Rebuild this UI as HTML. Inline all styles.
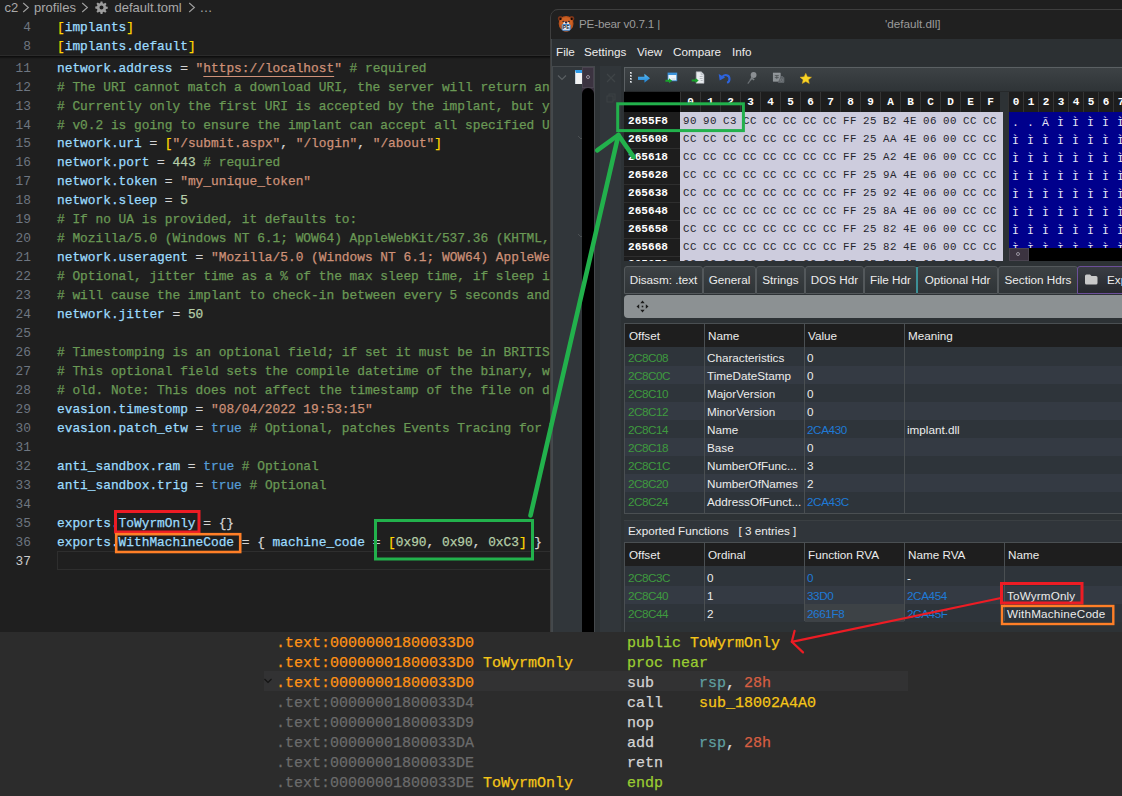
<!DOCTYPE html>
<html><head><meta charset="utf-8"><title>default.toml</title>
<style>
*{box-sizing:border-box;margin:0;padding:0}
html,body{width:1122px;height:796px;overflow:hidden;background:#1f1f1f}
body{position:relative;font-family:"Liberation Sans",sans-serif}
.abs{position:absolute}
#vs{position:absolute;left:0;top:0;width:560px;height:632px;background:#1f1f1f;overflow:hidden}
#bc{position:absolute;left:4px;top:0;height:16px;line-height:15px;font-size:13px;color:#a9a9a9;white-space:pre}
.ln{position:absolute;left:0;width:560px;height:19px;line-height:19px;font-family:"Liberation Mono",monospace;font-size:12.83px;white-space:pre;color:#d4d4d4}
.ln i{position:absolute;left:0;width:31px;text-align:right;font-style:normal;color:#6e7681}
.ln.cur i{color:#cccccc}
.ln b{position:absolute;left:57px;font-weight:normal}
.k{color:#9cdcfe}.s{color:#ce9178}.c{color:#6a9955}.n{color:#b5cea8}.t{color:#569cd6}.y{color:#ffd700}.u{text-decoration:underline;text-underline-offset:4px;text-decoration-thickness:1px}
#ida{position:absolute;left:0;top:632px;width:1122px;height:164px;background:#2c2c2c;overflow:hidden}
.il{position:absolute;left:0;width:1122px;height:20px;line-height:20px;font-family:"Liberation Mono",monospace;font-size:15px;white-space:pre;color:#d4d4d4}
.il span{position:absolute;top:0}
.il span span{position:static}
.a1{left:276px;color:#ff9214}.a2{left:276px;color:#6b6b6b}.lb{left:483px;color:#f5c518}.m{left:627px}.o{left:699px}
.lbc{color:#f5c518}
.g{color:#9acd32}.r{color:#5f9ea0}.h{color:#d75f42}
#pe{position:absolute;left:551px;top:9px;width:580px;height:623px;background:#2d3235;border-top-left-radius:8px;overflow:hidden;font-size:12px;color:#e8e8e8}
#pe{position:absolute;left:0;top:0;width:1122px;height:632px;background:none;border-radius:0;clip-path:inset(9px 0 0 550px round 8px 0 0 0);font-size:11.7px;color:#ececec;overflow:hidden}
.t12{position:absolute;height:18px;line-height:18px;font-size:11.7px;white-space:pre}
.hh{position:absolute;height:20px;line-height:20px;text-align:center;font-family:"Liberation Mono",monospace;font-weight:bold;font-size:11px;color:#fff;border-left:1px solid #343434}
.ha{position:absolute;left:624px;width:56px;line-height:18px;padding-left:4px;font-family:"Liberation Mono",monospace;font-weight:bold;font-size:11.1px;color:#fff;overflow:hidden}
.hv{position:absolute;width:20px;line-height:18px;text-align:center;font-family:"Liberation Mono",monospace;font-size:10.8px;color:#26262e;overflow:hidden;letter-spacing:0.5px}
.ar{position:absolute;left:-1px;height:18px;line-height:20px;font-family:"Liberation Mono",monospace;font-size:11.6px;color:#e4e4f4;white-space:pre}
.ar span{display:inline-block;width:15px;text-align:center}
.bc{position:absolute;top:0;height:16px;line-height:15px;font-size:13px;color:#a9a9a9;white-space:pre}
.ln b,.il{-webkit-text-stroke:0.25px}

</style></head><body>
<div id="vs">
<div class="bc" style="left:4.5px">c2</div><svg class="abs" style="left:22px;top:2px" width="8" height="11" viewBox="0 0 8 11"><path d="M1.2 1 L6.4 5.5 L1.2 10" fill="none" stroke="#a0a0a0" stroke-width="1.1"/></svg><div class="bc" style="left:34px">profiles</div><svg class="abs" style="left:81px;top:2px" width="8" height="11" viewBox="0 0 8 11"><path d="M1.2 1 L6.4 5.5 L1.2 10" fill="none" stroke="#a0a0a0" stroke-width="1.1"/></svg><svg class="abs" style="left:95px;top:1px" width="13" height="13" viewBox="0 0 24 24"><path fill="#9d9d9d" fill-rule="evenodd" d="M10.3 1h3.4l.6 3.2 1.9.8 2.7-1.8 2.4 2.4-1.8 2.7.8 1.9 3.2.6v3.4l-3.2.6-.8 1.9 1.8 2.7-2.4 2.4-2.7-1.8-1.9.8-.6 3.2h-3.4l-.6-3.2-1.9-.8-2.7 1.8-2.4-2.4 1.8-2.7-.8-1.9L.5 13.7v-3.4l3.2-.6.8-1.9-1.8-2.7 2.400-2.4 2.700 1.800 1.900-.8zM12 8.300a3.700 3.700 0 1 0 0 7.400 3.700 3.700 0 0 0 0-7.400z"/></svg><div class="bc" style="left:114.5px">default.toml</div><svg class="abs" style="left:188px;top:2px" width="8" height="11" viewBox="0 0 8 11"><path d="M1.2 1 L6.4 5.5 L1.2 10" fill="none" stroke="#a0a0a0" stroke-width="1.1"/></svg><div class="bc" style="left:199.5px">…</div>
<div class="ln" style="top:18px"><i>4</i><b><span class="y">[</span><span class="k">implants</span><span class="y">]</span></b></div>
<div class="ln" style="top:37px"><i>8</i><b><span class="y">[</span><span class="k">implants.default</span><span class="y">]</span></b></div>
<div class="abs" style="left:0;top:55px;width:560px;height:1px;background:#2b2b2b"></div>
<div class="abs" style="left:0;top:56px;width:560px;height:3px;background:linear-gradient(#000a,#0000)"></div>
<div class="ln" style="top:59px"><i>11</i><b><span class="k">network.address</span> = <span class="s">"</span><span class="s u">https://localhost</span><span class="s">"</span> <span class="c"># required</span></b></div>
<div class="ln" style="top:78px"><i>12</i><b><span class="c"># The URI cannot match a download URI, the server will return an</span></b></div>
<div class="ln" style="top:97px"><i>13</i><b><span class="c"># Currently only the first URI is accepted by the implant, but yo</span></b></div>
<div class="ln" style="top:116px"><i>14</i><b><span class="c"># v0.2 is going to ensure the implant can accept all specified UR</span></b></div>
<div class="ln" style="top:134px"><i>15</i><b><span class="k">network.uri</span> = <span class="y">[</span><span class="s">"/submit.aspx"</span>, <span class="s">"/login"</span>, <span class="s">"/about"</span><span class="y">]</span></b></div>
<div class="ln" style="top:153px"><i>16</i><b><span class="k">network.port</span> = <span class="n">443</span> <span class="c"># required</span></b></div>
<div class="ln" style="top:172px"><i>17</i><b><span class="k">network.token</span> = <span class="s">"my_unique_token"</span></b></div>
<div class="ln" style="top:191px"><i>18</i><b><span class="k">network.sleep</span> = <span class="n">5</span></b></div>
<div class="ln" style="top:210px"><i>19</i><b><span class="c"># If no UA is provided, it defaults to:</span></b></div>
<div class="ln" style="top:229px"><i>20</i><b><span class="c"># Mozilla/5.0 (Windows NT 6.1; WOW64) AppleWebKit/537.36 (KHTML, l</span></b></div>
<div class="ln" style="top:248px"><i>21</i><b><span class="k">network.useragent</span> = <span class="s">"Mozilla/5.0 (Windows NT 6.1; WOW64) AppleWeb</span></b></div>
<div class="ln" style="top:267px"><i>22</i><b><span class="c"># Optional, jitter time as a % of the max sleep time, if sleep is</span></b></div>
<div class="ln" style="top:286px"><i>23</i><b><span class="c"># will cause the implant to check-in between every 5 seconds and </span></b></div>
<div class="ln" style="top:305px"><i>24</i><b><span class="k">network.jitter</span> = <span class="n">50</span></b></div>
<div class="ln" style="top:324px"><i>25</i><b></b></div>
<div class="ln" style="top:343px"><i>26</i><b><span class="c"># Timestomping is an optional field; if set it must be in BRITISH</span></b></div>
<div class="ln" style="top:362px"><i>27</i><b><span class="c"># This optional field sets the compile datetime of the binary, wh</span></b></div>
<div class="ln" style="top:381px"><i>28</i><b><span class="c"># old. Note: This does not affect the timestamp of the file on di</span></b></div>
<div class="ln" style="top:400px"><i>29</i><b><span class="k">evasion.timestomp</span> = <span class="s">"08/04/2022 19:53:15"</span></b></div>
<div class="ln" style="top:419px"><i>30</i><b><span class="k">evasion.patch_etw</span> = <span class="t">true</span> <span class="c"># Optional, patches Events Tracing for W</span></b></div>
<div class="ln" style="top:438px"><i>31</i><b></b></div>
<div class="ln" style="top:457px"><i>32</i><b><span class="k">anti_sandbox.ram</span> = <span class="t">true</span> <span class="c"># Optional</span></b></div>
<div class="ln" style="top:476px"><i>33</i><b><span class="k">anti_sandbox.trig</span> = <span class="t">true</span> <span class="c"># Optional</span></b></div>
<div class="ln" style="top:495px"><i>34</i><b></b></div>
<div class="ln" style="top:514px"><i>35</i><b><span class="k">exports.ToWyrmOnly</span> = {}</b></div>
<div class="ln" style="top:533px"><i>36</i><b><span class="k">exports.WithMachineCode</span> = { <span class="k">machine_code</span> = <span class="y">[</span><span class="n">0x90</span>, <span class="n">0x90</span>, <span class="n">0xC3</span><span class="y">]</span> }</b></div>
<div class="ln cur" style="top:552px"><i>37</i><b></b></div>
<div class="abs" style="left:57px;top:551px;width:503px;height:19px;border:1px solid #2e2e2e"></div>
</div>
<div id="pe">
<div style="position:absolute;left:551px;top:9px;width:580px;height:30px;background:#202020;border-top:1px solid #3c3c3c"></div>
<svg class="abs" style="left:557px;top:15px" width="18" height="18" viewBox="0 0 18 18">
<circle cx="3.500" cy="3.500" r="2.600" fill="#7a3418"/><circle cx="14.700" cy="3.500" r="2.600" fill="#7a3418"/>
<ellipse cx="9.100" cy="8.700" rx="7.400" ry="7.600" fill="#b9521d"/>
<ellipse cx="9.100" cy="7.800" rx="6.200" ry="5.600" fill="#cd6123"/>
<ellipse cx="9.100" cy="15" rx="3.200" ry="1.600" fill="#c8683a"/>
<ellipse cx="3.600" cy="3.900" rx="1.200" ry="1.100" fill="#1a0905" transform="rotate(-40 3.600 3.900)"/><ellipse cx="14.600" cy="3.900" rx="1.200" ry="1.100" fill="#1a0905" transform="rotate(40 14.600 3.900)"/>
<ellipse cx="6.400" cy="6.600" rx="1.100" ry="0.800" fill="#3a2a2a"/><ellipse cx="11.900" cy="6.600" rx="1.100" ry="0.800" fill="#3a2a2a"/>
<ellipse cx="7.600" cy="8.300" rx="1.300" ry="1.500" fill="#efe6dc"/><ellipse cx="10.700" cy="8.300" rx="1.300" ry="1.500" fill="#efe6dc"/>
<ellipse cx="9.100" cy="7.500" rx="1.300" ry="0.900" fill="#1c2350"/>
<rect x="5.200" y="9.500" width="8" height="5.800" rx="0.800" fill="#eef2f7" stroke="#2f86d8" stroke-width="0.900"/>
<text x="9.200" y="14.300" text-anchor="middle" font-family="Liberation Sans, sans-serif" font-weight="bold" font-size="5" fill="#20242c">PE</text>
</svg>
<div class="t12" style="left:579px;top:15px;color:#9b9b9b;letter-spacing:-0.2px">PE-bear v0.7.1 |</div>
<div class="t12" style="left:885px;top:15px;color:#9b9b9b">'default.dll]</div>
<div class="abs" style="left:550px;top:9px;width:600px;height:700px;border:1px solid #3e3e3e;border-radius:8px 0 0 0;pointer-events:none"></div>
<div style="position:absolute;left:551px;top:39px;width:580px;height:27px;background:#2c3033"></div>
<div class="t12" style="left:556px;top:43px;color:#ececec">File</div>
<div class="t12" style="left:584px;top:43px;color:#ececec">Settings</div>
<div class="t12" style="left:637px;top:43px;color:#ececec">View</div>
<div class="t12" style="left:673px;top:43px;color:#ececec">Compare</div>
<div class="t12" style="left:732px;top:43px;color:#ececec">Info</div>
<div style="position:absolute;left:551px;top:66px;width:580px;height:566px;background:#2d3235"></div>
<div style="position:absolute;left:551px;top:39px;width:1px;height:593px;background:#43484b"></div>
<div style="position:absolute;left:552px;top:66px;width:43px;height:566px;background:#31363a;border:1px solid #45494c;border-bottom:none"></div>
<svg class="abs" style="left:556px;top:72px" width="12" height="12" viewBox="0 0 12 12"><path d="M2 3.5 L6 7.5 L10 3.5" fill="none" stroke="#5a5f62" stroke-width="1.2"/></svg>
<svg class="abs" style="left:576px;top:133px" width="10" height="10" viewBox="0 0 10 10"><path d="M2 3 L5 6 L8 3" fill="none" stroke="#4a4f52" stroke-width="1"/></svg>
<svg class="abs" style="left:576px;top:231px" width="10" height="10" viewBox="0 0 10 10"><path d="M2 3 L5 6 L8 3" fill="none" stroke="#4a4f52" stroke-width="1"/></svg>
<div style="position:absolute;left:575px;top:70px;width:7px;height:14px;background:#f2f2f2;border-top:3px solid #2d9be8;border-left:1px solid #c9d3dc"></div>
<div style="position:absolute;left:582px;top:67px;width:12px;height:565px;background:#000"></div>
<div style="position:absolute;left:582px;top:67px;width:12px;height:21px;background:#3b3340;border:1px solid #4a4450"></div>
<div style="position:absolute;left:586px;top:75px;width:4px;height:4px;border:1px solid #9a94a0;border-radius:2px"></div>
<div style="position:absolute;left:582px;top:88px;width:12px;height:8px;background:#3b3340"></div>
<div style="position:absolute;left:582px;top:88px;width:12px;height:16px;background:#000;border-radius:6px 6px 0 0"></div>
<div style="position:absolute;left:600px;top:66px;width:21px;height:566px;background:#31363a"></div>
<svg class="abs" style="left:605px;top:72px" width="12" height="12" viewBox="0 0 12 12"><path d="M2 2 L10 10 M10 2 L2 10" fill="none" stroke="#3f4447" stroke-width="1.3"/></svg>
<svg class="abs" style="left:605px;top:92px" width="12" height="12" viewBox="0 0 12 12"><rect x="2" y="4" width="6" height="6" fill="none" stroke="#3b4043" stroke-width="1.1"/><path d="M4 4 V2 H10 V8 H8" fill="none" stroke="#3b4043" stroke-width="1.1"/></svg>
<div style="position:absolute;left:624px;top:67px;width:510px;height:25px;background:linear-gradient(#3d4245,#2f3437);border-top:1px solid #5b6063;border-left:1px solid #5b6063;border-bottom:1px solid #26292b"></div>
<div style="position:absolute;left:630px;top:72px;width:2px;height:2px;background:#9aa0a4"></div>
<div style="position:absolute;left:630px;top:72px;width:1px;height:1px;background:#f0f0f0"></div>
<div style="position:absolute;left:630px;top:75px;width:2px;height:2px;background:#9aa0a4"></div>
<div style="position:absolute;left:630px;top:75px;width:1px;height:1px;background:#f0f0f0"></div>
<div style="position:absolute;left:630px;top:78px;width:2px;height:2px;background:#9aa0a4"></div>
<div style="position:absolute;left:630px;top:78px;width:1px;height:1px;background:#f0f0f0"></div>
<div style="position:absolute;left:630px;top:81px;width:2px;height:2px;background:#9aa0a4"></div>
<div style="position:absolute;left:630px;top:81px;width:1px;height:1px;background:#f0f0f0"></div>
<svg class="abs" style="left:624px;top:64px" width="200" height="30" viewBox="0 0 200 30">
<defs><linearGradient id="gb" x1="0" y1="0" x2="0" y2="1"><stop offset="0" stop-color="#5bbcf5"/><stop offset="1" stop-color="#1c7fd0"/></linearGradient></defs>
<g transform="translate(14,9.8)"><path d="M0 2.9 H6.4 V0 L12 4.5 L6.4 9 V6.1 H0 Z" fill="url(#gb)"/></g>
<g transform="translate(41.4,8.6)"><rect x="2.6" y="0.4" width="8.8" height="7.8" fill="#eef4fa" stroke="#3b93dc" stroke-width="0.8"/><rect x="2.6" y="0.4" width="8.800" height="2" fill="#3b93dc"/><path d="M0 7.200 H3.600 V5.600 L6.800 8.200 L3.600 10.600 V9.200 H0 Z" fill="#18a32b"/><path d="M6 6 h4 v1 h-4z" fill="#c8d4e0"/></g>
<g transform="translate(67.7,7.500)"><path d="M4.500 0.300 H9.500 L12.300 3 V11.800 H4.500 Z" fill="#e9ecef" stroke="#a7adb3" stroke-width="0.600"/><path d="M9.300 0.300 V3.200 H12.300" fill="#cfd4d9" stroke="#a7adb3" stroke-width="0.500"/><path d="M8 5 H11 M8 7 H11 M9 9 H11" stroke="#a0a6ac" stroke-width="0.700"/><path d="M0 8 H3.800 V6.400 L7 9 L3.800 11.600 V10 H0 Z" fill="#18a32b"/></g>
<g transform="translate(94.500,8.900)"><path d="M3.500 4.200 C6 0.800 11 1.800 11 6 C11 8 10 9.300 8.600 10" fill="none" stroke="#2d63dc" stroke-width="2.100"/><path d="M0.200 1.200 L1.200 7.600 L6.600 4.600 Z" fill="#2d63dc"/></g>
<g transform="translate(123.400,8)"><circle cx="6.200" cy="3" r="2.900" fill="#8b8f93"/><path d="M4.800 5.500 L2.800 8.200 M3.600 5.600 L6.800 7.800" stroke="#7b8084" stroke-width="1.600" fill="none"/><path d="M3.400 7.600 L0.400 11.600" stroke="#6b7074" stroke-width="1.200"/></g>
<g transform="translate(148.800,8.600)"><rect x="0.400" y="0.400" width="7" height="8.200" fill="#8d9296" stroke="#a4a9ad" stroke-width="0.500"/><path d="M2 3 H6 M2 5 H6 M4 3 V6.500" stroke="#4a4f52" stroke-width="0.800"/><path d="M7.800 4 H10 L11.200 5.200 V9.800 H5.500 V8.800" fill="#5d6266" stroke="#777c80" stroke-width="0.500"/><circle cx="8.700" cy="7.600" r="1.300" fill="none" stroke="#80858a" stroke-width="0.600"/></g>
<g transform="translate(176,9.300)"><path d="M5.750 0 L7.400 3.500 L11.500 3.900 L8.400 6.500 L9.300 10.200 L5.750 8.300 L2.200 10.200 L3.100 6.500 L0 3.900 L4.100 3.500 Z" fill="#f8d526" stroke="#dca818" stroke-width="0.500"/></g>
</svg>
<div class="hexwrap" style="position:absolute;left:624px;top:92px;width:380px;height:170px;background:#2d3235;overflow:hidden"></div>
<div style="position:absolute;left:624px;top:92px;width:56px;height:20px;background:#000"></div>
<div style="position:absolute;left:680px;top:92px;width:320px;height:20px;background:#1d1d1d"></div>
<div class="hh" style="left:680px;top:92px;width:20px">0</div>
<div class="hh" style="left:700px;top:92px;width:20px">1</div>
<div class="hh" style="left:720px;top:92px;width:20px">2</div>
<div class="hh" style="left:740px;top:92px;width:20px">3</div>
<div class="hh" style="left:760px;top:92px;width:20px">4</div>
<div class="hh" style="left:780px;top:92px;width:20px">5</div>
<div class="hh" style="left:800px;top:92px;width:20px">6</div>
<div class="hh" style="left:820px;top:92px;width:20px">7</div>
<div class="hh" style="left:840px;top:92px;width:20px">8</div>
<div class="hh" style="left:860px;top:92px;width:20px">9</div>
<div class="hh" style="left:880px;top:92px;width:20px">A</div>
<div class="hh" style="left:900px;top:92px;width:20px">B</div>
<div class="hh" style="left:920px;top:92px;width:20px">C</div>
<div class="hh" style="left:940px;top:92px;width:20px">D</div>
<div class="hh" style="left:960px;top:92px;width:20px">E</div>
<div class="hh" style="left:980px;top:92px;width:20px">F</div>
<div style="position:absolute;left:680px;top:112px;width:323px;height:149px;background:#cdccdd"></div>
<div style="position:absolute;left:624px;top:112px;width:56px;height:149px;background:#1d1d1d"></div>
<div class="ha" style="top:112px;height:18px">2655F8</div>
<div class="hv" style="left:680px;top:112px;height:18px">90</div>
<div class="hv" style="left:700px;top:112px;height:18px">90</div>
<div class="hv" style="left:720px;top:112px;height:18px">C3</div>
<div class="hv" style="left:740px;top:112px;height:18px">CC</div>
<div class="hv" style="left:760px;top:112px;height:18px">CC</div>
<div class="hv" style="left:780px;top:112px;height:18px">CC</div>
<div class="hv" style="left:800px;top:112px;height:18px">CC</div>
<div class="hv" style="left:820px;top:112px;height:18px">CC</div>
<div class="hv" style="left:840px;top:112px;height:18px">FF</div>
<div class="hv" style="left:860px;top:112px;height:18px">25</div>
<div class="hv" style="left:880px;top:112px;height:18px">B2</div>
<div class="hv" style="left:900px;top:112px;height:18px">4E</div>
<div class="hv" style="left:920px;top:112px;height:18px">06</div>
<div class="hv" style="left:940px;top:112px;height:18px">00</div>
<div class="hv" style="left:960px;top:112px;height:18px">CC</div>
<div class="hv" style="left:980px;top:112px;height:18px">CC</div>
<div class="ha" style="top:130px;height:18px">265608</div>
<div class="hv" style="left:680px;top:130px;height:18px">CC</div>
<div class="hv" style="left:700px;top:130px;height:18px">CC</div>
<div class="hv" style="left:720px;top:130px;height:18px">CC</div>
<div class="hv" style="left:740px;top:130px;height:18px">CC</div>
<div class="hv" style="left:760px;top:130px;height:18px">CC</div>
<div class="hv" style="left:780px;top:130px;height:18px">CC</div>
<div class="hv" style="left:800px;top:130px;height:18px">CC</div>
<div class="hv" style="left:820px;top:130px;height:18px">CC</div>
<div class="hv" style="left:840px;top:130px;height:18px">FF</div>
<div class="hv" style="left:860px;top:130px;height:18px">25</div>
<div class="hv" style="left:880px;top:130px;height:18px">AA</div>
<div class="hv" style="left:900px;top:130px;height:18px">4E</div>
<div class="hv" style="left:920px;top:130px;height:18px">06</div>
<div class="hv" style="left:940px;top:130px;height:18px">00</div>
<div class="hv" style="left:960px;top:130px;height:18px">CC</div>
<div class="hv" style="left:980px;top:130px;height:18px">CC</div>
<div class="abs" style="left:624px;top:130px;width:56px;height:1px;background:#2e2e2e"></div>
<div class="ha" style="top:148px;height:18px">265618</div>
<div class="hv" style="left:680px;top:148px;height:18px">CC</div>
<div class="hv" style="left:700px;top:148px;height:18px">CC</div>
<div class="hv" style="left:720px;top:148px;height:18px">CC</div>
<div class="hv" style="left:740px;top:148px;height:18px">CC</div>
<div class="hv" style="left:760px;top:148px;height:18px">CC</div>
<div class="hv" style="left:780px;top:148px;height:18px">CC</div>
<div class="hv" style="left:800px;top:148px;height:18px">CC</div>
<div class="hv" style="left:820px;top:148px;height:18px">CC</div>
<div class="hv" style="left:840px;top:148px;height:18px">FF</div>
<div class="hv" style="left:860px;top:148px;height:18px">25</div>
<div class="hv" style="left:880px;top:148px;height:18px">A2</div>
<div class="hv" style="left:900px;top:148px;height:18px">4E</div>
<div class="hv" style="left:920px;top:148px;height:18px">06</div>
<div class="hv" style="left:940px;top:148px;height:18px">00</div>
<div class="hv" style="left:960px;top:148px;height:18px">CC</div>
<div class="hv" style="left:980px;top:148px;height:18px">CC</div>
<div class="abs" style="left:624px;top:148px;width:56px;height:1px;background:#2e2e2e"></div>
<div class="ha" style="top:166px;height:18px">265628</div>
<div class="hv" style="left:680px;top:166px;height:18px">CC</div>
<div class="hv" style="left:700px;top:166px;height:18px">CC</div>
<div class="hv" style="left:720px;top:166px;height:18px">CC</div>
<div class="hv" style="left:740px;top:166px;height:18px">CC</div>
<div class="hv" style="left:760px;top:166px;height:18px">CC</div>
<div class="hv" style="left:780px;top:166px;height:18px">CC</div>
<div class="hv" style="left:800px;top:166px;height:18px">CC</div>
<div class="hv" style="left:820px;top:166px;height:18px">CC</div>
<div class="hv" style="left:840px;top:166px;height:18px">FF</div>
<div class="hv" style="left:860px;top:166px;height:18px">25</div>
<div class="hv" style="left:880px;top:166px;height:18px">9A</div>
<div class="hv" style="left:900px;top:166px;height:18px">4E</div>
<div class="hv" style="left:920px;top:166px;height:18px">06</div>
<div class="hv" style="left:940px;top:166px;height:18px">00</div>
<div class="hv" style="left:960px;top:166px;height:18px">CC</div>
<div class="hv" style="left:980px;top:166px;height:18px">CC</div>
<div class="abs" style="left:624px;top:166px;width:56px;height:1px;background:#2e2e2e"></div>
<div class="ha" style="top:184px;height:18px">265638</div>
<div class="hv" style="left:680px;top:184px;height:18px">CC</div>
<div class="hv" style="left:700px;top:184px;height:18px">CC</div>
<div class="hv" style="left:720px;top:184px;height:18px">CC</div>
<div class="hv" style="left:740px;top:184px;height:18px">CC</div>
<div class="hv" style="left:760px;top:184px;height:18px">CC</div>
<div class="hv" style="left:780px;top:184px;height:18px">CC</div>
<div class="hv" style="left:800px;top:184px;height:18px">CC</div>
<div class="hv" style="left:820px;top:184px;height:18px">CC</div>
<div class="hv" style="left:840px;top:184px;height:18px">FF</div>
<div class="hv" style="left:860px;top:184px;height:18px">25</div>
<div class="hv" style="left:880px;top:184px;height:18px">92</div>
<div class="hv" style="left:900px;top:184px;height:18px">4E</div>
<div class="hv" style="left:920px;top:184px;height:18px">06</div>
<div class="hv" style="left:940px;top:184px;height:18px">00</div>
<div class="hv" style="left:960px;top:184px;height:18px">CC</div>
<div class="hv" style="left:980px;top:184px;height:18px">CC</div>
<div class="abs" style="left:624px;top:184px;width:56px;height:1px;background:#2e2e2e"></div>
<div class="ha" style="top:202px;height:18px">265648</div>
<div class="hv" style="left:680px;top:202px;height:18px">CC</div>
<div class="hv" style="left:700px;top:202px;height:18px">CC</div>
<div class="hv" style="left:720px;top:202px;height:18px">CC</div>
<div class="hv" style="left:740px;top:202px;height:18px">CC</div>
<div class="hv" style="left:760px;top:202px;height:18px">CC</div>
<div class="hv" style="left:780px;top:202px;height:18px">CC</div>
<div class="hv" style="left:800px;top:202px;height:18px">CC</div>
<div class="hv" style="left:820px;top:202px;height:18px">CC</div>
<div class="hv" style="left:840px;top:202px;height:18px">FF</div>
<div class="hv" style="left:860px;top:202px;height:18px">25</div>
<div class="hv" style="left:880px;top:202px;height:18px">8A</div>
<div class="hv" style="left:900px;top:202px;height:18px">4E</div>
<div class="hv" style="left:920px;top:202px;height:18px">06</div>
<div class="hv" style="left:940px;top:202px;height:18px">00</div>
<div class="hv" style="left:960px;top:202px;height:18px">CC</div>
<div class="hv" style="left:980px;top:202px;height:18px">CC</div>
<div class="abs" style="left:624px;top:202px;width:56px;height:1px;background:#2e2e2e"></div>
<div class="ha" style="top:220px;height:18px">265658</div>
<div class="hv" style="left:680px;top:220px;height:18px">CC</div>
<div class="hv" style="left:700px;top:220px;height:18px">CC</div>
<div class="hv" style="left:720px;top:220px;height:18px">CC</div>
<div class="hv" style="left:740px;top:220px;height:18px">CC</div>
<div class="hv" style="left:760px;top:220px;height:18px">CC</div>
<div class="hv" style="left:780px;top:220px;height:18px">CC</div>
<div class="hv" style="left:800px;top:220px;height:18px">CC</div>
<div class="hv" style="left:820px;top:220px;height:18px">CC</div>
<div class="hv" style="left:840px;top:220px;height:18px">FF</div>
<div class="hv" style="left:860px;top:220px;height:18px">25</div>
<div class="hv" style="left:880px;top:220px;height:18px">82</div>
<div class="hv" style="left:900px;top:220px;height:18px">4E</div>
<div class="hv" style="left:920px;top:220px;height:18px">06</div>
<div class="hv" style="left:940px;top:220px;height:18px">00</div>
<div class="hv" style="left:960px;top:220px;height:18px">CC</div>
<div class="hv" style="left:980px;top:220px;height:18px">CC</div>
<div class="abs" style="left:624px;top:220px;width:56px;height:1px;background:#2e2e2e"></div>
<div class="ha" style="top:238px;height:18px">265668</div>
<div class="hv" style="left:680px;top:238px;height:18px">CC</div>
<div class="hv" style="left:700px;top:238px;height:18px">CC</div>
<div class="hv" style="left:720px;top:238px;height:18px">CC</div>
<div class="hv" style="left:740px;top:238px;height:18px">CC</div>
<div class="hv" style="left:760px;top:238px;height:18px">CC</div>
<div class="hv" style="left:780px;top:238px;height:18px">CC</div>
<div class="hv" style="left:800px;top:238px;height:18px">CC</div>
<div class="hv" style="left:820px;top:238px;height:18px">CC</div>
<div class="hv" style="left:840px;top:238px;height:18px">FF</div>
<div class="hv" style="left:860px;top:238px;height:18px">25</div>
<div class="hv" style="left:880px;top:238px;height:18px">82</div>
<div class="hv" style="left:900px;top:238px;height:18px">4E</div>
<div class="hv" style="left:920px;top:238px;height:18px">06</div>
<div class="hv" style="left:940px;top:238px;height:18px">00</div>
<div class="hv" style="left:960px;top:238px;height:18px">CC</div>
<div class="hv" style="left:980px;top:238px;height:18px">CC</div>
<div class="abs" style="left:624px;top:238px;width:56px;height:1px;background:#2e2e2e"></div>
<div class="ha" style="top:256px;height:5px;line-height:16px">265678</div>
<div class="hv" style="left:680px;top:256px;height:5px;line-height:16px">CC</div>
<div class="hv" style="left:700px;top:256px;height:5px;line-height:16px">CC</div>
<div class="hv" style="left:720px;top:256px;height:5px;line-height:16px">CC</div>
<div class="hv" style="left:740px;top:256px;height:5px;line-height:16px">CC</div>
<div class="hv" style="left:760px;top:256px;height:5px;line-height:16px">CC</div>
<div class="hv" style="left:780px;top:256px;height:5px;line-height:16px">CC</div>
<div class="hv" style="left:800px;top:256px;height:5px;line-height:16px">CC</div>
<div class="hv" style="left:820px;top:256px;height:5px;line-height:16px">CC</div>
<div class="hv" style="left:840px;top:256px;height:5px;line-height:16px">FF</div>
<div class="hv" style="left:860px;top:256px;height:5px;line-height:16px">25</div>
<div class="hv" style="left:880px;top:256px;height:5px;line-height:16px">7A</div>
<div class="hv" style="left:900px;top:256px;height:5px;line-height:16px">4E</div>
<div class="hv" style="left:920px;top:256px;height:5px;line-height:16px">06</div>
<div class="hv" style="left:940px;top:256px;height:5px;line-height:16px">00</div>
<div class="hv" style="left:960px;top:256px;height:5px;line-height:16px">CC</div>
<div class="hv" style="left:980px;top:256px;height:5px;line-height:16px">CC</div>
<div class="abs" style="left:624px;top:256px;width:56px;height:1px;background:#2e2e2e"></div>
<div style="position:absolute;left:1008px;top:92px;width:120px;height:20px;background:#1d1d1d"></div>
<div class="hh" style="left:1008px;top:92px;width:15px">0</div>
<div class="hh" style="left:1023px;top:92px;width:15px">1</div>
<div class="hh" style="left:1038px;top:92px;width:15px">2</div>
<div class="hh" style="left:1053px;top:92px;width:15px">3</div>
<div class="hh" style="left:1068px;top:92px;width:15px">4</div>
<div class="hh" style="left:1083px;top:92px;width:15px">5</div>
<div class="hh" style="left:1098px;top:92px;width:15px">6</div>
<div class="hh" style="left:1113px;top:92px;width:15px">7</div>
<div style="position:absolute;left:1009px;top:112px;width:120px;height:136px;background:#00008c;overflow:hidden"><div class="ar" style="top:1px"><span>.</span><span>.</span><span>Ã</span><span>Ì</span><span>Ì</span><span>Ì</span><span>Ì</span><span>Ì</span></div><div class="ar" style="top:19px"><span>Ì</span><span>Ì</span><span>Ì</span><span>Ì</span><span>Ì</span><span>Ì</span><span>Ì</span><span>Ì</span></div><div class="ar" style="top:37px"><span>Ì</span><span>Ì</span><span>Ì</span><span>Ì</span><span>Ì</span><span>Ì</span><span>Ì</span><span>Ì</span></div><div class="ar" style="top:55px"><span>Ì</span><span>Ì</span><span>Ì</span><span>Ì</span><span>Ì</span><span>Ì</span><span>Ì</span><span>Ì</span></div><div class="ar" style="top:73px"><span>Ì</span><span>Ì</span><span>Ì</span><span>Ì</span><span>Ì</span><span>Ì</span><span>Ì</span><span>Ì</span></div><div class="ar" style="top:91px"><span>Ì</span><span>Ì</span><span>Ì</span><span>Ì</span><span>Ì</span><span>Ì</span><span>Ì</span><span>Ì</span></div><div class="ar" style="top:109px"><span>Ì</span><span>Ì</span><span>Ì</span><span>Ì</span><span>Ì</span><span>Ì</span><span>Ì</span><span>Ì</span></div><div class="ar" style="top:127px"><span>Ì</span><span>Ì</span><span>Ì</span><span>Ì</span><span>Ì</span><span>Ì</span><span>Ì</span><span>Ì</span></div></div>
<div style="position:absolute;left:1009px;top:248px;width:120px;height:13px;background:#000"></div>
<div style="position:absolute;left:1009px;top:248px;width:20px;height:13px;background:#3b3340;border:1px solid #4a4450"></div>
<div style="position:absolute;left:1016px;top:252px;width:4px;height:4px;border:1px solid #9a94a0;border-radius:2px"></div>
<div style="position:absolute;left:624px;top:266px;width:79px;height:28px;background:linear-gradient(#3c4144,#2f3437);border:1px solid #53585b;border-radius:3px 3px 0 0;text-align:center;line-height:26px;color:#ececec;font-size:11.7px;white-space:pre">Disasm: .text</div>
<div style="position:absolute;left:703px;top:266px;width:53px;height:28px;background:linear-gradient(#3c4144,#2f3437);border:1px solid #53585b;border-radius:3px 3px 0 0;text-align:center;line-height:26px;color:#ececec;font-size:11.7px;white-space:pre">General</div>
<div style="position:absolute;left:756px;top:266px;width:49px;height:28px;background:linear-gradient(#3c4144,#2f3437);border:1px solid #53585b;border-radius:3px 3px 0 0;text-align:center;line-height:26px;color:#ececec;font-size:11.7px;white-space:pre">Strings</div>
<div style="position:absolute;left:805px;top:266px;width:59px;height:28px;background:linear-gradient(#3c4144,#2f3437);border:1px solid #53585b;border-radius:3px 3px 0 0;text-align:center;line-height:26px;color:#ececec;font-size:11.7px;white-space:pre">DOS Hdr</div>
<div style="position:absolute;left:864px;top:266px;width:53px;height:28px;background:linear-gradient(#3c4144,#2f3437);border:1px solid #53585b;border-radius:3px 3px 0 0;text-align:center;line-height:26px;color:#ececec;font-size:11.7px;white-space:pre">File Hdr</div>
<div style="position:absolute;left:917px;top:266px;width:81px;height:28px;background:linear-gradient(#3c4144,#2f3437);border:1px solid #53585b;border-radius:3px 3px 0 0;text-align:center;line-height:26px;color:#ececec;font-size:11.7px;white-space:pre">Optional Hdr</div>
<div style="position:absolute;left:998px;top:266px;width:80px;height:28px;background:linear-gradient(#3c4144,#2f3437);border:1px solid #53585b;border-radius:3px 3px 0 0;text-align:center;line-height:26px;color:#ececec;font-size:11.7px;white-space:pre">Section Hdrs</div>
<div style="position:absolute;left:916px;top:267px;width:2px;height:26px;background:#3d8f96"></div>
<div style="position:absolute;left:1077px;top:266px;width:60px;height:28px;background:linear-gradient(#3a3d44,#26282d);border:1px solid #6c4f9a;border-radius:3px 3px 0 0"></div>
<svg class="abs" style="left:1084px;top:273px" width="16" height="14" viewBox="0 0 16 14"><path d="M1 3 Q1 1.5 2.5 1.5 H6 L7.5 3 H12 Q13.5 3 13.5 4.5 V10 Q13.5 11.5 12 11.5 H2.5 Q1 11.5 1 10 Z" fill="#c9c9c9"/></svg>
<div class="t12" style="left:1107px;top:271px;color:#ececec">Exp</div>
<div style="position:absolute;left:624px;top:295px;width:510px;height:23px;background:#8c9193;border-radius:4px 0 0 4px"></div>
<svg class="abs" style="left:636px;top:300px" width="13" height="13" viewBox="0 0 13 13"><path d="M6.5 0.5 L8.7 3.2 H4.3 Z M6.5 12.5 L8.7 9.8 H4.3 Z M0.5 6.5 L3.2 4.3 V8.7 Z M12.5 6.5 L9.8 4.3 V8.7 Z" fill="#1b1b1b"/><rect x="5.7" y="5.7" width="1.6" height="1.6" fill="#1b1b1b"/></svg>
<div style="position:absolute;left:624px;top:323px;width:510px;height:191px;background:#2e343a;border:1px solid #4a4f52;border-right:none"></div>
<div style="position:absolute;left:625px;top:324px;width:510px;height:23px;background:#1e1e1e"></div>
<div class="t12" style="left:629px;top:327px;color:#ececec">Offset</div>
<div class="t12" style="left:708px;top:327px;color:#ececec">Name</div>
<div class="t12" style="left:808px;top:327px;color:#ececec">Value</div>
<div class="t12" style="left:908px;top:327px;color:#ececec">Meaning</div>
<div style="position:absolute;left:704px;top:324px;width:1px;height:189px;background:#4a4f52"></div>
<div style="position:absolute;left:804px;top:324px;width:1px;height:189px;background:#4a4f52"></div>
<div style="position:absolute;left:904px;top:324px;width:1px;height:189px;background:#4a4f52"></div>
<div class="t12" style="left:628px;top:349px;color:#3f9a3f;letter-spacing:-0.5px">2C8C08</div>
<div class="t12" style="left:707px;top:349px;color:#ececec">Characteristics</div>
<div class="t12" style="left:807px;top:349px;color:#ececec">0</div>
<div style="position:absolute;left:625px;top:366px;width:510px;height:18px;background:#343a43"></div>
<div class="t12" style="left:628px;top:367px;color:#3f9a3f;letter-spacing:-0.5px">2C8C0C</div>
<div class="t12" style="left:707px;top:367px;color:#ececec">TimeDateStamp</div>
<div class="t12" style="left:807px;top:367px;color:#ececec">0</div>
<div class="t12" style="left:628px;top:385px;color:#3f9a3f;letter-spacing:-0.5px">2C8C10</div>
<div class="t12" style="left:707px;top:385px;color:#ececec">MajorVersion</div>
<div class="t12" style="left:807px;top:385px;color:#ececec">0</div>
<div style="position:absolute;left:625px;top:402px;width:510px;height:18px;background:#343a43"></div>
<div class="t12" style="left:628px;top:403px;color:#3f9a3f;letter-spacing:-0.5px">2C8C12</div>
<div class="t12" style="left:707px;top:403px;color:#ececec">MinorVersion</div>
<div class="t12" style="left:807px;top:403px;color:#ececec">0</div>
<div class="t12" style="left:628px;top:421px;color:#3f9a3f;letter-spacing:-0.5px">2C8C14</div>
<div class="t12" style="left:707px;top:421px;color:#ececec">Name</div>
<div class="t12" style="left:807px;top:421px;color:#1f7ad6;letter-spacing:-0.4px">2CA430</div>
<div class="t12" style="left:907px;top:421px;color:#ececec">implant.dll</div>
<div style="position:absolute;left:625px;top:438px;width:510px;height:18px;background:#343a43"></div>
<div class="t12" style="left:628px;top:439px;color:#3f9a3f;letter-spacing:-0.5px">2C8C18</div>
<div class="t12" style="left:707px;top:439px;color:#ececec">Base</div>
<div class="t12" style="left:807px;top:439px;color:#ececec">0</div>
<div class="t12" style="left:628px;top:457px;color:#3f9a3f;letter-spacing:-0.5px">2C8C1C</div>
<div class="t12" style="left:707px;top:457px;color:#ececec">NumberOfFunc...</div>
<div class="t12" style="left:807px;top:457px;color:#ececec">3</div>
<div style="position:absolute;left:625px;top:474px;width:510px;height:18px;background:#343a43"></div>
<div class="t12" style="left:628px;top:475px;color:#3f9a3f;letter-spacing:-0.5px">2C8C20</div>
<div class="t12" style="left:707px;top:475px;color:#ececec">NumberOfNames</div>
<div class="t12" style="left:807px;top:475px;color:#ececec">2</div>
<div class="t12" style="left:628px;top:493px;color:#3f9a3f;letter-spacing:-0.5px">2C8C24</div>
<div class="t12" style="left:707px;top:493px;color:#ececec">AddressOfFunct...</div>
<div class="t12" style="left:807px;top:493px;color:#1f7ad6;letter-spacing:-0.4px">2CA43C</div>
<div style="position:absolute;left:704px;top:324px;width:1px;height:189px;background:#4a4f52"></div>
<div style="position:absolute;left:804px;top:324px;width:1px;height:189px;background:#4a4f52"></div>
<div style="position:absolute;left:904px;top:324px;width:1px;height:189px;background:#4a4f52"></div>
<div style="position:absolute;left:624px;top:520px;width:510px;height:22px;background:#30353a;border-top:1px solid #3a3f42"></div>
<div class="t12" style="left:628px;top:522px;color:#ececec">Exported Functions&nbsp;&nbsp; [ 3 entries ]</div>
<div style="position:absolute;left:624px;top:542px;width:510px;height:81px;background:#2d3235"></div>
<div style="position:absolute;left:624px;top:542px;width:510px;height:80px;background:#2e343a;border:1px solid #4a4f52;border-right:none;border-bottom:none"></div>
<div style="position:absolute;left:625px;top:543px;width:510px;height:23px;background:#1e1e1e"></div>
<div class="t12" style="left:629px;top:546px;color:#ececec">Offset</div>
<div class="t12" style="left:708px;top:546px;color:#ececec">Ordinal</div>
<div class="t12" style="left:808px;top:546px;color:#ececec">Function RVA</div>
<div class="t12" style="left:908px;top:546px;color:#ececec">Name RVA</div>
<div class="t12" style="left:1008px;top:546px;color:#ececec">Name</div>
<div style="position:absolute;left:704px;top:543px;width:1px;height:78px;background:#4a4f52"></div>
<div style="position:absolute;left:804px;top:543px;width:1px;height:78px;background:#4a4f52"></div>
<div style="position:absolute;left:904px;top:543px;width:1px;height:78px;background:#4a4f52"></div>
<div style="position:absolute;left:1004px;top:543px;width:1px;height:78px;background:#4a4f52"></div>
<div class="t12" style="left:628px;top:569px;color:#3f9a3f;letter-spacing:-0.5px">2C8C3C</div>
<div class="t12" style="left:707px;top:569px;color:#ececec">0</div>
<div class="t12" style="left:807px;top:569px;color:#1f7ad6;letter-spacing:-0.4px">0</div>
<div class="t12" style="left:907px;top:569px;color:#ececec">-</div>
<div style="position:absolute;left:625px;top:586px;width:510px;height:18px;background:#343a43"></div>
<div class="t12" style="left:628px;top:587px;color:#3f9a3f;letter-spacing:-0.5px">2C8C40</div>
<div class="t12" style="left:707px;top:587px;color:#ececec">1</div>
<div class="t12" style="left:807px;top:587px;color:#1f7ad6;letter-spacing:-0.4px">33D0</div>
<div class="t12" style="left:907px;top:587px;color:#1f7ad6;letter-spacing:-0.4px">2CA454</div>
<div class="t12" style="left:1007px;top:587px;color:#ececec"><span style="letter-spacing:0.15px">ToWyrmOnly</span></div>
<div class="t12" style="left:628px;top:605px;color:#3f9a3f;letter-spacing:-0.5px">2C8C44</div>
<div class="t12" style="left:707px;top:605px;color:#ececec">2</div>
<div class="t12" style="left:807px;top:605px;color:#1f7ad6;letter-spacing:-0.4px">2661F8</div>
<div class="t12" style="left:907px;top:605px;color:#1f7ad6;letter-spacing:-0.4px">2CA45F</div>
<div class="t12" style="left:1007px;top:605px;color:#ececec"><span style="letter-spacing:0.2px">WithMachineCode</span></div>
<div style="position:absolute;left:704px;top:543px;width:1px;height:78px;background:#4a4f52"></div>
<div style="position:absolute;left:804px;top:543px;width:1px;height:78px;background:#4a4f52"></div>
<div style="position:absolute;left:904px;top:543px;width:1px;height:78px;background:#4a4f52"></div>
<div style="position:absolute;left:1004px;top:543px;width:1px;height:78px;background:#4a4f52"></div>
<div style="position:absolute;left:624px;top:622px;width:1px;height:10px;background:#4a4f52"></div>
<div style="position:absolute;left:805px;top:604px;width:99px;height:18px;background:#3d4246"></div>
<div class="t12" style="left:807px;top:605px;color:#1f7ad6;letter-spacing:-0.4px">2661F8</div>
</div>
<div id="ida">
<div class="abs" style="left:264px;top:39px;width:644px;height:20px;background:#323233"></div>
<svg class="abs" style="left:262px;top:43px" width="12" height="12" viewBox="0 0 12 12"><path d="M2.5 4 L6 7.5 L9.5 4" fill="none" stroke="#141414" stroke-width="1.2"/></svg>
<div class="il" style="top:2px"><span class="a1">.text:00000001800033D0</span><span class="m g">public <span class="lbc">ToWyrmOnly</span></span></div>
<div class="il" style="top:22px"><span class="a1">.text:00000001800033D0</span><span class="lb">ToWyrmOnly</span><span class="m g">proc near</span></div>
<div class="il" style="top:42px"><span class="a1">.text:00000001800033D0</span><span class="m">sub</span><span class="o"><span class="r">rsp</span>, <span class="h">28h</span></span></div>
<div class="il" style="top:62px"><span class="a2">.text:00000001800033D4</span><span class="m">call</span><span class="o lbc">sub_18002A4A0</span></div>
<div class="il" style="top:82px"><span class="a2">.text:00000001800033D9</span><span class="m">nop</span></div>
<div class="il" style="top:102px"><span class="a2">.text:00000001800033DA</span><span class="m">add</span><span class="o"><span class="r">rsp</span>, <span class="h">28h</span></span></div>
<div class="il" style="top:122px"><span class="a2">.text:00000001800033DE</span><span class="m">retn</span></div>
<div class="il" style="top:142px"><span class="a2">.text:00000001800033DE</span><span class="lb">ToWyrmOnly</span><span class="m g">endp</span></div>
</div>
<svg class="abs" style="left:0;top:0" width="1122" height="796" viewBox="0 0 1122 796">
<g fill="none" stroke="#22b14c">
<rect x="375.5" y="520.5" width="157" height="38.5" stroke-width="3"/>
<rect x="617.7" y="103.8" width="125.7" height="26.8" stroke-width="3"/>
<g stroke-width="4.6" stroke-linecap="round" stroke-linejoin="round">
<path d="M530.5 515.5 L618.4 135"/>
<path d="M597.2 150.3 L618.4 135 L633.6 157"/>
</g>
</g>
<g fill="none" stroke="#ed1c24">
<rect x="115.5" y="511.5" width="83.5" height="20.5" stroke-width="3"/>
<rect x="1001.5" y="583.5" width="80.5" height="19.5" stroke-width="3"/>
<g stroke-width="2.2" stroke-linecap="round" stroke-linejoin="round">
<path d="M1001 598 L791.8 641.8"/>
<path d="M794.6 630.8 L791.8 641.8 L803 652.4"/>
</g>
</g>
<g fill="none" stroke="#ff7f27">
<rect x="116.2" y="534.2" width="124" height="17.8" stroke-width="2.6"/>
<rect x="1002" y="606" width="111.3" height="18" stroke-width="2.4"/>
</g>
</svg>

</body></html>
